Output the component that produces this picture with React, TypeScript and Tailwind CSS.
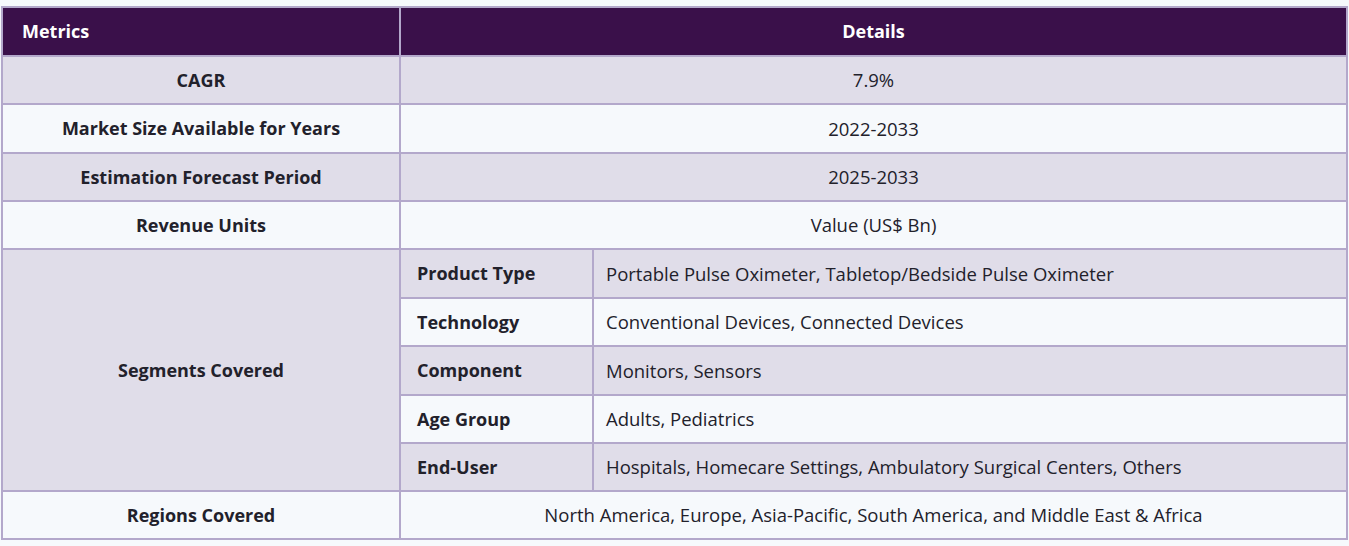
const rows = [
  { label: "CAGR", value: "7.9%", h: "h-[48px]" },
  { label: "Market Size Available for Years", value: "2022-2033", h: "h-[49px]" },
  { label: "Estimation Forecast Period", value: "2025-2033", h: "h-[48px]" },
  { label: "Revenue Units", value: "Value (US$ Bn)", h: "h-[48px]" },
];

const segments = [
  { name: "Product Type", value: "Portable Pulse Oximeter, Tabletop/Bedside Pulse Oximeter", h: "h-[49px]" },
  { name: "Technology", value: "Conventional Devices, Connected Devices", h: "h-[48px]" },
  { name: "Component", value: "Monitors, Sensors", h: "h-[49px]" },
  { name: "Age Group", value: "Adults, Pediatrics", h: "h-[48px]" },
  { name: "End-User", value: "Hospitals, Homecare Settings, Ambulatory Surgical Centers, Others", h: "h-[48px]" },
];

const cell = "border-2 border-[#b3a8cb] text-[#22212b]";
const label = "text-[18px] font-bold";
const value = "text-[18.5px]";

export default function App() {
  return (
    <div
      className="min-h-screen bg-[#f6f9fc] pt-[6px] pl-[1px]"
      style={{ fontFamily: "'Open Sans', Lato, sans-serif" }}
    >
      <table className="w-[1347px] border-collapse border-2 border-[#b3a8cb] table-fixed">
        <colgroup>
          <col className="w-[398px]" />
          <col className="w-[193px]" />
          <col />
        </colgroup>
        <thead>
          <tr className="bg-[#3a104a] text-white">
            <th className="border-2 border-[#b3a8cb] h-[49px] text-left pl-[19px] text-[18px] font-bold">Metrics</th>
            <th colSpan={2} className="border-2 border-[#b3a8cb] text-center text-[18px] font-bold">Details</th>
          </tr>
        </thead>
        <tbody>
          {rows.map((r, i) => (
            <tr key={r.label} className={i % 2 === 0 ? "bg-[#e0dde9]" : "bg-[#f6f9fc]"}>
              <td className={`${cell} ${r.h} ${label} text-center`}>{r.label}</td>
              <td colSpan={2} className={`${cell} ${value} text-center`}>{r.value}</td>
            </tr>
          ))}
          {segments.map((s, i) => (
            <tr key={s.name} className={i % 2 === 0 ? "bg-[#e0dde9]" : "bg-[#f6f9fc]"}>
              {i === 0 && (
                <td rowSpan={5} className={`${cell} ${label} bg-[#e0dde9] text-center`}>Segments Covered</td>
              )}
              <td className={`${cell} ${s.h} ${label} pl-[16px]`}>{s.name}</td>
              <td className={`${cell} ${value} pl-[12px]`}>{s.value}</td>
            </tr>
          ))}
          <tr className="bg-[#f6f9fc]">
            <td className={`${cell} h-[48px] ${label} text-center`}>Regions Covered</td>
            <td colSpan={2} className={`${cell} ${value} text-center`}>
              North America, Europe, Asia-Pacific, South America, and Middle East &amp; Africa
            </td>
          </tr>
        </tbody>
      </table>
    </div>
  );
}
